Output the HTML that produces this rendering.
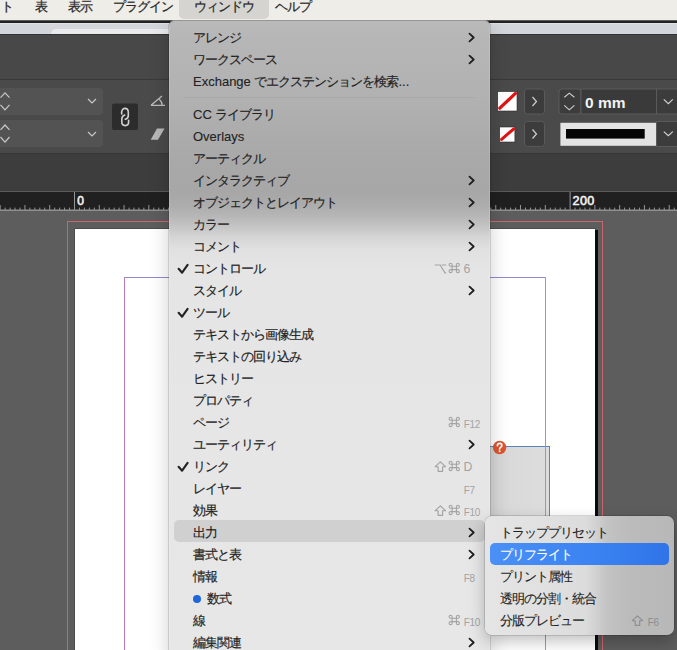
<!DOCTYPE html>
<html><head><meta charset="utf-8">
<style>
*{margin:0;padding:0;box-sizing:border-box}
html,body{width:677px;height:650px;overflow:hidden;background:#5d5d5d;font-family:"Liberation Sans",sans-serif}
.a{position:absolute}
#menubar{left:0;top:0;width:677px;height:20px;background:#eeede8;z-index:5}
.mb{position:absolute;z-index:7;top:0;height:18px;line-height:13px;font-size:13px;color:#2a2a2a;-webkit-text-stroke:0.25px #2a2a2a;letter-spacing:-1px}
#mbhl{left:179px;top:-4px;width:90px;height:22.8px;background:#d5d4d0;border-radius:5px;z-index:6}
#darkline{left:0;top:20.5px;width:677px;height:2.5px;background:#222}
#titlestrip{left:0;top:23px;width:677px;height:11px;background:#d3d7db;border-top:1px solid #dfe2e4}
#tab{left:51px;top:28.5px;width:430px;height:5.5px;background:#e9eaeb;border-radius:5px 0 0 0}
#panel1{left:0;top:34px;width:677px;height:45px;background:#484848;border-top:1px solid #333}
#line1{left:0;top:79px;width:677px;height:1px;background:#393939}
#toolbar{left:0;top:80px;width:677px;height:74px;background:#4a4a4a}
#line2{left:0;top:153px;width:677px;height:1px;background:#363636}
#panel3{left:0;top:154px;width:677px;height:37px;background:#3d3d3d}
#rline{left:0;top:191px;width:677px;height:1px;background:#5a5a5a}
#ruler{left:0;top:192px;width:677px;height:19px;background:#202020}
#pb{left:0;top:211px;width:677px;height:439px;background:#5d5d5d}
.field{position:absolute;background:#535353;border-radius:4px}
.btn{position:absolute;background:#3d3d3d;border:1px solid #585858;border-radius:3px}
#menu{left:169px;top:20px;width:321px;height:640px;border-radius:6px;
 background:linear-gradient(to bottom,#bababa 0px,#b6b6b6 20px,#b1b1b1 80px,#ababab 120px,#a8a8a8 145px,#a7a7a7 172px,#acacac 185px,#b6b5b5 195px,#c3c2c2 205px,#d5d5d5 217px,#e1e1e1 230px,#e5e5e5 250px,#e7e7e7 640px);
 box-shadow:0 0 0 0.5px rgba(0,0,0,0.25), 0 6px 20px rgba(0,0,0,0.2), inset 0 1px 0 rgba(120,120,120,0.6), inset 0 0 0 0.5px rgba(255,255,255,0.3)}
.mi{position:absolute;left:24px;height:22px;line-height:23px;font-size:13px;color:#222;white-space:nowrap;-webkit-text-stroke:0.16px #222;letter-spacing:-1px}
.ck{position:absolute;left:9px;height:22px;line-height:22px;font-size:13px;color:#1e1e1e}
.sc{position:absolute;right:19px;height:22px;line-height:22px;font-size:11px;color:#a0a0a0;white-space:nowrap}
.lat{-webkit-text-stroke:0.1px #1e1e1e;letter-spacing:0}
.chev{position:absolute;left:300px;width:7px;height:10px}
#sep{left:14px;top:76px;width:292px;height:1px;background:#a9a9a9}
#hl{left:5px;top:499.5px;width:311px;height:22px;background:#d0d0d0;border-radius:5px}
#sub{left:485px;top:515.6px;width:189px;height:119.4px;border-radius:7px;
 background:linear-gradient(to right,#e5e5e5 0px,#e1e1e1 50px,#dcdcdc 100px,#d2d2d2 110px,#c3c3c3 122px,#bbbbbb 145px,#b8b8b8 189px);
 box-shadow:0 0 0 0.5px rgba(0,0,0,0.25),0 6px 16px rgba(0,0,0,0.25)}
.si{position:absolute;left:15px;height:22px;line-height:23px;font-size:13px;color:#1e1e1e;white-space:nowrap;-webkit-text-stroke:0.12px currentColor;letter-spacing:-1px}
#subhl{left:5px;top:27px;width:179px;height:22px;border-radius:5px;background:linear-gradient(to right,#4a90f6,#3a82f2 60%,#2f74e8)}
</style></head><body>
<div id="menubar" class="a"></div>
<div id="mbhl" class="a"></div>
<div class="mb" style="left:1px">ト</div>
<div class="mb" style="left:35px">表</div>
<div class="mb" style="left:68px">表示</div>
<div class="mb" style="left:113px">プラグイン</div>
<div class="mb" style="left:194px">ウィンドウ</div>
<div class="mb" style="left:275px">ヘルプ</div>
<div id="darkline" class="a"></div>
<div id="titlestrip" class="a"></div>
<div id="tab" class="a"></div>
<div id="panel1" class="a"></div>
<div id="line1" class="a"></div>
<div id="toolbar" class="a"></div>
<div id="line2" class="a"></div>
<div id="panel3" class="a"></div>
<div id="rline" class="a"></div>
<div id="ruler" class="a"></div>
<div id="pb" class="a"></div>

<!-- toolbar left controls -->
<div class="field" style="left:-4px;top:88px;width:107px;height:27px"></div>
<div class="field" style="left:-4px;top:120px;width:107px;height:27px"></div>
<svg class="a" style="left:0;top:80px" width="177" height="74">
 <g fill="none" stroke="#c8c8c8" stroke-width="1.2">
  <path d="M0.5 17.6 L5 12.8 L9.5 17.6"/><path d="M0.5 24.8 L5 29.8 L9.5 24.8"/>
  <path d="M0.5 49.8 L5 45 L9.5 49.8"/><path d="M0.5 57 L5 62.2 L9.5 57"/>
  <path d="M88 19 L92 23 L96 19"/><path d="M88 52 L92 56 L96 52"/>
 </g>
 <rect x="112" y="23.5" width="26" height="26.5" rx="2" fill="#2c2c2c"/>
 <g fill="none" stroke="#d2d2d2" stroke-width="1.6" stroke-linecap="round">
  <path d="M121.7 34 C121.3 30.5 122.8 28.4 124.9 28.4 C127 28.4 128.3 30 128.3 32.3 V35.5 C128.3 37.5 127 38.8 125.3 39.2"/>
  <path d="M124.7 35.1 C123 35.7 121.8 37 121.8 39.2 V42 C121.8 44.2 123.2 45.6 125.2 45.6 C127.2 45.6 128.6 44.2 128.6 42 V40.3"/>
 </g>
 <g fill="none" stroke="#bdbdbd" stroke-width="1.3"><path d="M151 25.3 H165 M151 25.3 L162 16 M159.3 19.2 Q162 21.5 162.2 25.3"/></g>
 <path d="M157 48.5 L164.6 48.5 L158 59.8 L150.7 59.8 Z" fill="#b8b8b8"/>
</svg>

<!-- toolbar right controls -->
<svg class="a" style="left:490px;top:80px" width="187" height="74">
 <rect x="7.7" y="11.6" width="19.3" height="19.4" fill="#fff" stroke="#2a2a2a" stroke-width="0.6"/>
 <path d="M9.8 28.2 L25.4 13.4" stroke="#e01212" stroke-width="3.2" stroke-linecap="round"/>
 <rect x="34.5" y="9" width="20" height="25" rx="3" fill="#3c3c3c" stroke="#5a5a5a"/>
 <path d="M42.5 17 L46.5 21.5 L42.5 26" fill="none" stroke="#d0d0d0" stroke-width="1.2"/>
 <rect x="69" y="9" width="22" height="25" rx="3" fill="#3c3c3c" stroke="#5a5a5a"/>
 <path d="M74.3 17.2 L79.3 13.1 L84.4 17.2 M74.3 25.3 L79.3 29.8 L84.4 25.3" fill="none" stroke="#d0d0d0" stroke-width="1.1"/>
 <rect x="91" y="9" width="75.5" height="25" fill="#3a3a3a" stroke="#5a5a5a"/>
 <rect x="166.5" y="9" width="25" height="25" fill="#3c3c3c" stroke="#5a5a5a"/>
 <path d="M173.8 19.4 L178.3 23.6 L182.8 19.4" fill="none" stroke="#d0d0d0" stroke-width="1.2"/>
 <text x="95" y="28" font-family="Liberation Sans" font-weight="bold" font-size="15.5" fill="#f2f2f2">0 mm</text>
 <rect x="9.7" y="47" width="15.2" height="15" fill="#fff" stroke="#2a2a2a" stroke-width="0.6"/>
 <path d="M11.6 59.4 L23.8 48.8" stroke="#e01212" stroke-width="3" stroke-linecap="round"/>
 <rect x="34.5" y="41.4" width="20" height="25" rx="3" fill="#3c3c3c" stroke="#5a5a5a"/>
 <path d="M42.5 49.5 L46.5 54 L42.5 58.5" fill="none" stroke="#d0d0d0" stroke-width="1.2"/>
 <rect x="70.4" y="42.8" width="96.2" height="23" fill="#e3e3e3"/>
 <rect x="76" y="49" width="78.7" height="9.6" fill="#050505"/>
 <rect x="166.5" y="41.5" width="25" height="25" fill="#3c3c3c" stroke="#5a5a5a"/>
 <path d="M173.8 51.6 L178.3 55.8 L182.8 51.6" fill="none" stroke="#d0d0d0" stroke-width="1.2"/>
</svg>

<!-- ruler -->
<svg class="a" style="left:0;top:192px" width="677" height="20" id="rulersvg"><path d="M0 18.3 H677" stroke="#8f8f8f" stroke-width="1.6"/><path d="M0.16 13V18M5.12 15.6V18M10.07 15.6V18M15.03 15.6V18M19.98 15.6V18M24.94 13V18M29.90 15.6V18M34.85 15.6V18M39.81 15.6V18M44.76 15.6V18M49.72 13V18M54.68 15.6V18M59.63 15.6V18M64.59 15.6V18M69.54 15.6V18M74.50 0V18M79.46 15.6V18M84.41 15.6V18M89.37 15.6V18M94.32 15.6V18M99.28 13V18M104.24 15.6V18M109.19 15.6V18M114.15 15.6V18M119.10 15.6V18M124.06 13V18M129.02 15.6V18M133.97 15.6V18M138.93 15.6V18M143.88 15.6V18M148.84 13V18M153.80 15.6V18M158.75 15.6V18M163.71 15.6V18M168.66 15.6V18M173.62 13V18M178.58 15.6V18M183.53 15.6V18M188.49 15.6V18M193.44 15.6V18M198.40 13V18M203.36 15.6V18M208.31 15.6V18M213.27 15.6V18M218.22 15.6V18M223.18 13V18M228.14 15.6V18M233.09 15.6V18M238.05 15.6V18M243.00 15.6V18M247.96 13V18M252.92 15.6V18M257.87 15.6V18M262.83 15.6V18M267.78 15.6V18M272.74 13V18M277.70 15.6V18M282.65 15.6V18M287.61 15.6V18M292.56 15.6V18M297.52 13V18M302.48 15.6V18M307.43 15.6V18M312.39 15.6V18M317.34 15.6V18M322.30 0V18M327.26 15.6V18M332.21 15.6V18M337.17 15.6V18M342.12 15.6V18M347.08 13V18M352.04 15.6V18M356.99 15.6V18M361.95 15.6V18M366.90 15.6V18M371.86 13V18M376.82 15.6V18M381.77 15.6V18M386.73 15.6V18M391.68 15.6V18M396.64 13V18M401.60 15.6V18M406.55 15.6V18M411.51 15.6V18M416.46 15.6V18M421.42 13V18M426.38 15.6V18M431.33 15.6V18M436.29 15.6V18M441.24 15.6V18M446.20 13V18M451.16 15.6V18M456.11 15.6V18M461.07 15.6V18M466.02 15.6V18M470.98 13V18M475.94 15.6V18M480.89 15.6V18M485.85 15.6V18M490.80 15.6V18M495.76 13V18M500.72 15.6V18M505.67 15.6V18M510.63 15.6V18M515.58 15.6V18M520.54 13V18M525.50 15.6V18M530.45 15.6V18M535.41 15.6V18M540.36 15.6V18M545.32 13V18M550.28 15.6V18M555.23 15.6V18M560.19 15.6V18M565.14 15.6V18M570.10 0V18M575.06 15.6V18M580.01 15.6V18M584.97 15.6V18M589.92 15.6V18M594.88 13V18M599.84 15.6V18M604.79 15.6V18M609.75 15.6V18M614.70 15.6V18M619.66 13V18M624.62 15.6V18M629.57 15.6V18M634.53 15.6V18M639.48 15.6V18M644.44 13V18M649.40 15.6V18M654.35 15.6V18M659.31 15.6V18M664.26 15.6V18M669.22 13V18M674.18 15.6V18" stroke="#959595" stroke-width="1"/><text x="77.3" y="12.6" font-family="Liberation Sans" font-size="12" fill="#f2f2f2" stroke="#f2f2f2" stroke-width="0.6">0</text><text x="572.6" y="13" font-family="Liberation Sans" font-size="12.6" letter-spacing="0.3" fill="#f2f2f2" stroke="#f2f2f2" stroke-width="0.6">200</text></svg>

<!-- page -->
<div class="a" style="left:67px;top:220.5px;width:536px;height:440px;border:1px solid #cc666e"></div>
<div class="a" style="left:75px;top:229px;width:520px;height:430px;background:#fff;box-shadow:0 0 0 0.5px #3a3a3a"></div>
<div class="a" style="left:595px;top:230px;width:3px;height:430px;background:#0a0a0a"></div>
<div class="a" style="left:124px;top:277px;width:422px;height:400px;border-top:1px solid #9189cf;border-left:1px solid #bd7cb8;border-right:1px solid #bd7cb8"></div>
<!-- frame -->
<div class="a" style="left:480px;top:446px;width:70px;height:100px;background:linear-gradient(to right,#d2d2d2 0px,#d8d8d8 20px,#dddddd 70px);border-top:1px solid #5a82c0;border-right:1px solid #5a82c0"></div>
<div class="a" style="left:545px;top:277px;width:1px;height:400px;background:#c982b8"></div>
<svg class="a" style="left:492px;top:439.5px" width="15" height="15"><circle cx="7.6" cy="7.5" r="6.7" fill="#dc5530"/><path d="M5.4 5.6 Q5.5 3.4 7.6 3.4 Q9.8 3.4 9.8 5.4 Q9.8 6.7 8.4 7.4 Q7.6 7.9 7.6 9" fill="none" stroke="#fff" stroke-width="1.7" stroke-linecap="round"/><circle cx="7.6" cy="11.3" r="1" fill="#fff"/></svg>

<!-- main menu -->
<div id="menu" class="a"><div class="a" id="mwrap" style="left:0;top:0.5px;width:321px;height:640px">
 <div id="sep" class="a"></div>
 <div id="hl" class="a"></div>
 <div class="mi" style="top:5px;left:24px">アレンジ</div>
 <div class="mi" style="top:27px;left:24px">ワークスペース</div>
 <div class="mi" style="top:49px;left:24px"><span class="lat">Exchange </span>でエクステンションを検索<span class="lat">...</span></div>
 <div class="mi" style="top:82px;left:24px"><span class="lat">CC </span>ライブラリ</div>
 <div class="mi" style="top:104px;left:24px"><span class="lat">Overlays</span></div>
 <div class="mi" style="top:126px;left:24px">アーティクル</div>
 <div class="mi" style="top:148px;left:24px">インタラクティブ</div>
 <div class="mi" style="top:170px;left:24px">オブジェクトとレイアウト</div>
 <div class="mi" style="top:192px;left:24px">カラー</div>
 <div class="mi" style="top:214px;left:24px">コメント</div>
 <div class="mi" style="top:236px;left:24px">コントロール</div>
 <div class="mi" style="top:258px;left:24px">スタイル</div>
 <div class="mi" style="top:280px;left:24px">ツール</div>
 <div class="mi" style="top:302px;left:24px">テキストから画像生成</div>
 <div class="mi" style="top:324px;left:24px">テキストの回り込み</div>
 <div class="mi" style="top:346px;left:24px">ヒストリー</div>
 <div class="mi" style="top:368px;left:24px">プロパティ</div>
 <div class="mi" style="top:390px;left:24px">ページ</div>
 <div class="mi" style="top:412px;left:24px">ユーティリティ</div>
 <div class="mi" style="top:434px;left:24px">リンク</div>
 <div class="mi" style="top:456px;left:24px">レイヤー</div>
 <div class="mi" style="top:478px;left:24px">効果</div>
 <div class="mi" style="top:500px;left:24px">出力</div>
 <div class="mi" style="top:522px;left:24px">書式と表</div>
 <div class="mi" style="top:544px;left:24px">情報</div>
 <div class="mi" style="top:566px;left:38px">数式</div>
 <div class="mi" style="top:588px;left:24px">線</div>
 <div class="mi" style="top:610px;left:24px">編集関連</div>
 <div class="a" style="left:23.9px;top:574.8px;width:8px;height:8px;border-radius:50%;background:#1f66dc"></div>
 <svg class="a" style="left:0;top:0" width="321" height="640">
<path d="M300.5 12.65 L304.7 16.5 L300.5 20.35" fill="none" stroke="#1e1e1e" stroke-width="1.8" stroke-linecap="round" stroke-linejoin="round"/>
<path d="M300.5 34.65 L304.7 38.5 L300.5 42.35" fill="none" stroke="#1e1e1e" stroke-width="1.8" stroke-linecap="round" stroke-linejoin="round"/>
<path d="M300.5 155.65 L304.7 159.5 L300.5 163.35" fill="none" stroke="#1e1e1e" stroke-width="1.8" stroke-linecap="round" stroke-linejoin="round"/>
<path d="M300.5 177.65 L304.7 181.5 L300.5 185.35" fill="none" stroke="#1e1e1e" stroke-width="1.8" stroke-linecap="round" stroke-linejoin="round"/>
<path d="M300.5 199.65 L304.7 203.5 L300.5 207.35" fill="none" stroke="#1e1e1e" stroke-width="1.8" stroke-linecap="round" stroke-linejoin="round"/>
<path d="M300.5 221.65 L304.7 225.5 L300.5 229.35" fill="none" stroke="#1e1e1e" stroke-width="1.8" stroke-linecap="round" stroke-linejoin="round"/>
<path d="M9.6 247.8 L13.1 251.7 L18.6 243.9" fill="none" stroke="#222" stroke-width="2.1" stroke-linecap="round" stroke-linejoin="round"/>
<path d="M265.8 244.0 H271.1 L276.0 251.9 H277.2 M272.6 244.0 H277.2" fill="none" stroke="#a3a3a3" stroke-width="1.15"/>
<path d="M283.10 245.25 L283.10 243.75 A1.5 1.5 0 1 0 281.60 245.25 L288.90 245.25 A1.5 1.5 0 1 0 287.40 243.75 L287.40 250.15 A1.5 1.5 0 1 0 288.90 248.65 L281.60 248.65 A1.5 1.5 0 1 0 283.10 250.15 Z" fill="none" stroke="#a3a3a3" stroke-width="1.1"/>
<text x="294.6" y="252" font-family="Liberation Sans" font-size="12.3" fill="#a3a3a3">6</text>
<path d="M300.5 265.65 L304.7 269.5 L300.5 273.35" fill="none" stroke="#1e1e1e" stroke-width="1.8" stroke-linecap="round" stroke-linejoin="round"/>
<path d="M9.6 291.8 L13.1 295.7 L18.6 287.9" fill="none" stroke="#222" stroke-width="2.1" stroke-linecap="round" stroke-linejoin="round"/>
<path d="M283.10 399.25 L283.10 397.75 A1.5 1.5 0 1 0 281.60 399.25 L288.90 399.25 A1.5 1.5 0 1 0 287.40 397.75 L287.40 404.15 A1.5 1.5 0 1 0 288.90 402.65 L281.60 402.65 A1.5 1.5 0 1 0 283.10 404.15 Z" fill="none" stroke="#a3a3a3" stroke-width="1.1"/>
<text x="294.7" y="406.5" font-family="Liberation Sans" font-size="10" letter-spacing="-0.3" fill="#a3a3a3">F12</text>
<path d="M300.5 419.65 L304.7 423.5 L300.5 427.35" fill="none" stroke="#1e1e1e" stroke-width="1.8" stroke-linecap="round" stroke-linejoin="round"/>
<path d="M9.6 445.8 L13.1 449.7 L18.6 441.9" fill="none" stroke="#222" stroke-width="2.1" stroke-linecap="round" stroke-linejoin="round"/>
<path d="M271.34999999999997 440.8 L276.5 445.7 H273.59999999999997 V450.3 H269.09999999999997 V445.7 H266.2 Z" fill="none" stroke="#a3a3a3" stroke-width="1.15" stroke-linejoin="round"/>
<path d="M283.10 443.25 L283.10 441.75 A1.5 1.5 0 1 0 281.60 443.25 L288.90 443.25 A1.5 1.5 0 1 0 287.40 441.75 L287.40 448.15 A1.5 1.5 0 1 0 288.90 446.65 L281.60 446.65 A1.5 1.5 0 1 0 283.10 448.15 Z" fill="none" stroke="#a3a3a3" stroke-width="1.1"/>
<text x="294.6" y="450" font-family="Liberation Sans" font-size="12.3" fill="#a3a3a3">D</text>
<text x="294.7" y="472.5" font-family="Liberation Sans" font-size="10" letter-spacing="-0.3" fill="#a3a3a3">F7</text>
<path d="M271.34999999999997 484.8 L276.5 489.7 H273.59999999999997 V494.3 H269.09999999999997 V489.7 H266.2 Z" fill="none" stroke="#a3a3a3" stroke-width="1.15" stroke-linejoin="round"/>
<path d="M283.10 487.25 L283.10 485.75 A1.5 1.5 0 1 0 281.60 487.25 L288.90 487.25 A1.5 1.5 0 1 0 287.40 485.75 L287.40 492.15 A1.5 1.5 0 1 0 288.90 490.65 L281.60 490.65 A1.5 1.5 0 1 0 283.10 492.15 Z" fill="none" stroke="#a3a3a3" stroke-width="1.1"/>
<text x="294.7" y="494.5" font-family="Liberation Sans" font-size="10" letter-spacing="-0.3" fill="#a3a3a3">F10</text>
<path d="M300.5 507.65 L304.7 511.5 L300.5 515.35" fill="none" stroke="#1e1e1e" stroke-width="1.8" stroke-linecap="round" stroke-linejoin="round"/>
<path d="M300.5 529.65 L304.7 533.5 L300.5 537.35" fill="none" stroke="#1e1e1e" stroke-width="1.8" stroke-linecap="round" stroke-linejoin="round"/>
<text x="294.7" y="560.5" font-family="Liberation Sans" font-size="10" letter-spacing="-0.3" fill="#a3a3a3">F8</text>
<path d="M283.10 597.25 L283.10 595.75 A1.5 1.5 0 1 0 281.60 597.25 L288.90 597.25 A1.5 1.5 0 1 0 287.40 595.75 L287.40 602.15 A1.5 1.5 0 1 0 288.90 600.65 L281.60 600.65 A1.5 1.5 0 1 0 283.10 602.15 Z" fill="none" stroke="#a3a3a3" stroke-width="1.1"/>
<text x="294.7" y="604.5" font-family="Liberation Sans" font-size="10" letter-spacing="-0.3" fill="#a3a3a3">F10</text>
<path d="M300.5 617.65 L304.7 621.5 L300.5 625.35" fill="none" stroke="#1e1e1e" stroke-width="1.8" stroke-linecap="round" stroke-linejoin="round"/>
 </svg>
</div></div>

<!-- submenu -->
<div id="sub" class="a">
 <div id="subhl" class="a"></div>
 <div class="si" style="top:5px">トラッププリセット</div>
 <div class="si" style="top:27px;color:#fff">プリフライト</div>
 <div class="si" style="top:49px">プリント属性</div>
 <div class="si" style="top:71px">透明の分割・統合</div>
 <div class="si" style="top:93px">分版プレビュー</div>
 <svg class="a" style="left:0;top:0" width="189" height="120"><path d="M152.45 99.8 L157.6 104.7 H154.7 V109.3 H150.2 V104.7 H147.3 Z" fill="none" stroke="#8e8e8e" stroke-width="1.15" stroke-linejoin="round"/><text x="162.7" y="109.5" font-family="Liberation Sans" font-size="10" letter-spacing="-0.3" fill="#8e8e8e">F6</text></svg>
</div>

</body></html>
